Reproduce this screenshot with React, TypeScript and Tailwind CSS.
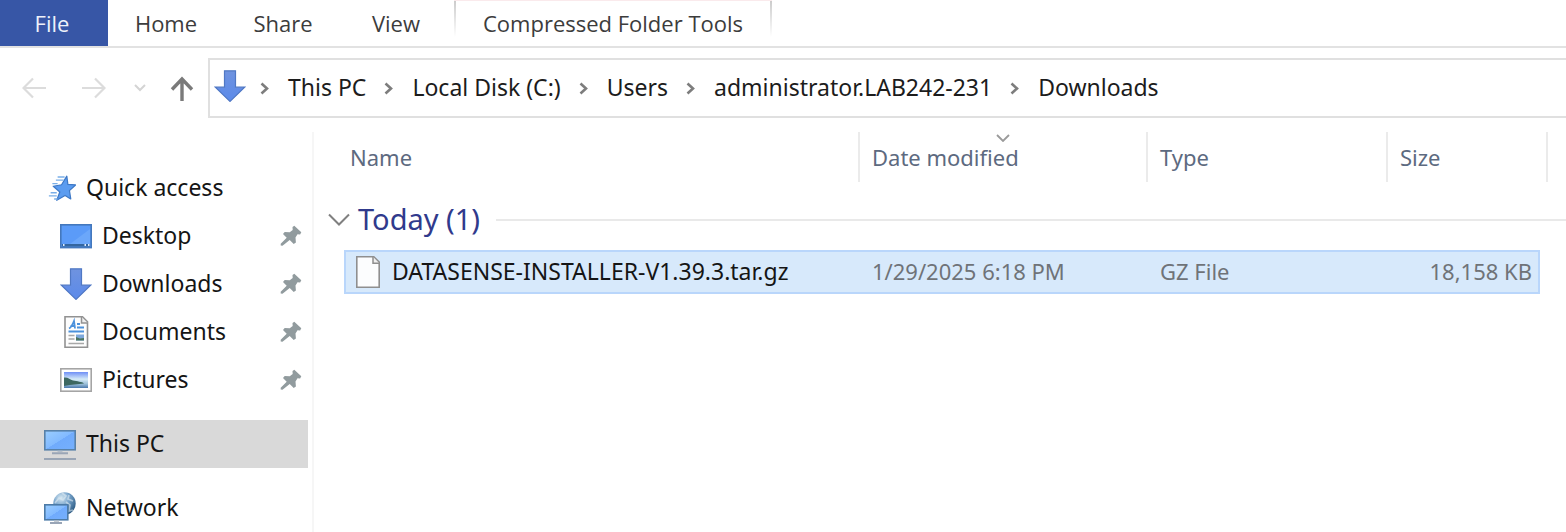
import React from "react";

type IconProps = { className?: string };

function DownArrowIcon({ className = "" }: IconProps) {
  return (
    <svg viewBox="0 0 32 32" className={`h-8 w-8 shrink-0 ${className}`} aria-hidden="true">
      <defs>
        <linearGradient id="arrowFill" x1="0" y1="0" x2="0" y2="1">
          <stop offset="0" stopColor="#6f93df" />
          <stop offset="1" stopColor="#5b8aea" />
        </linearGradient>
      </defs>
      <path d="M10.5 0.8h11v16.4h9.2L16 31.4 1.3 17.2h9.2z" fill="url(#arrowFill)" stroke="#5078c4" strokeWidth="1.2" />
    </svg>
  );
}

function StarIcon() {
  return (
    <svg viewBox="0 0 32 32" className="h-7 w-7 shrink-0" aria-hidden="true">
      <path d="M21.500 2.500l1.200 9.300 8.800.7-7 6.500 1.500 9.500-6.500-4-9.500 5.500 3.500-9.500-7.500-6.500 9.500-1.700z" fill="#5b9cf0" stroke="#3d78c6" strokeWidth="1.400" strokeLinejoin="round" />
      <path d="M11 3.500h8M9 7h9M5 11h6M3 21.500h7M1 25h9M7 28.500h4" stroke="#79aee8" strokeWidth="1.700" />
    </svg>
  );
}

function DesktopIcon() {
  return (
    <svg viewBox="0 0 32 32" className="h-8 w-8 shrink-0" aria-hidden="true">
      <rect x="0.8" y="4.800" width="30.4" height="22.8" fill="#5b9bf8" stroke="#4478bd" strokeWidth="1.6" />
      <path d="M10 24L30 9v15z" fill="#6ba7fa" />
      <path d="M2 25.300h28" stroke="#34669f" strokeWidth="2.600" />
      <path d="M3 25h1.500M24.500 25h1.500M28 25h1.500" stroke="#dbeaff" strokeWidth="1.800" />
    </svg>
  );
}

function DocumentIcon() {
  return (
    <svg viewBox="0 0 32 32" className="h-8 w-8 shrink-0" aria-hidden="true">
      <path d="M5 0.800h17.500l5 5v25.400H5z" fill="#fdfdfd" stroke="#929292" strokeWidth="1.600" />
      <path d="M21.500 1v6h6" fill="#ededed" stroke="#929292" strokeWidth="1.500" />
      <path d="M9 12.500c2-1 4-5 5-7.500l1 7.500M10.500 10h5" fill="none" stroke="#4b91dc" strokeWidth="1.800" />
      <path d="M17 8h3M17 11.500h7M8.500 15.500H24" stroke="#4b91dc" strokeWidth="1.900" />
      <path d="M8.500 19.500h6M8.500 23h6M8.500 27.500H24" stroke="#a8a8a8" strokeWidth="1.500" />
      <path d="M16 18.500h8v6h-8z" fill="#7da8dc" />
      <path d="M16 21l4 1.500 4-.5v2.500h-8z" fill="#4c7560" />
    </svg>
  );
}

function PictureIcon() {
  return (
    <svg viewBox="0 0 32 32" className="h-8 w-8 shrink-0" aria-hidden="true">
      <defs>
        <linearGradient id="skyFill" x1="0" y1="0" x2="0" y2="1">
          <stop offset="0" stopColor="#6f8ff6" />
          <stop offset="0.45" stopColor="#d5ebf7" />
          <stop offset="0.75" stopColor="#9bbfd8" />
          <stop offset="1" stopColor="#4b78ac" />
        </linearGradient>
      </defs>
      <rect x="0.800" y="4.800" width="30.400" height="22.400" fill="#fff" stroke="#a5a5a5" strokeWidth="1.600" />
      <rect x="4" y="8" width="24" height="16" fill="url(#skyFill)" />
      <path d="M4 13.500c4-.5 6 2 9 3 4 1 9 1 11 3-6 1-12 1-20 2.500z" fill="#3d6760" />
    </svg>
  );
}

function ComputerIcon() {
  return (
    <svg viewBox="0 0 32 32" className="h-8 w-8 shrink-0" aria-hidden="true">
      <defs>
        <linearGradient id="screenFill" x1="0" y1="0" x2="1" y2="1">
          <stop offset="0" stopColor="#9bceff" />
          <stop offset="0.5" stopColor="#82baff" />
          <stop offset="0.51" stopColor="#70abfc" />
          <stop offset="1" stopColor="#75b0fe" />
        </linearGradient>
      </defs>
      <rect x="0.800" y="2.800" width="30.400" height="19" fill="url(#screenFill)" stroke="#5781a9" strokeWidth="1.600" />
      <path d="M13.500 23.500h5" stroke="#b5bfca" strokeWidth="1.500" />
      <path d="M8 25.200h16M0 31h32" stroke="#99a5b6" strokeWidth="2" />
    </svg>
  );
}

function NetworkIcon() {
  return (
    <svg viewBox="0 0 32 32" className="h-8 w-8 shrink-0" aria-hidden="true">
      <defs>
        <radialGradient id="globeFill" cx="0.350" cy="0.250" r="0.800">
          <stop offset="0" stopColor="#d6e8f2" />
          <stop offset="0.45" stopColor="#79a5cc" />
          <stop offset="1" stopColor="#28567f" />
        </radialGradient>
      </defs>
      <circle cx="20.500" cy="11.500" r="11.200" fill="url(#globeFill)" />
      <path d="M18 1l4 3-3 4-4-2-4 5M25 3l-1 4 5 2M22 10l4 3-1 6 4-1" fill="none" stroke="#dceaf2" strokeWidth="1.700" opacity="0.600" />
      <rect x="0.800" y="12.800" width="23" height="15" fill="url(#screenFill)" stroke="#4c7ba7" strokeWidth="1.600" />
      <path d="M10 29h5" stroke="#b0bac4" strokeWidth="1.500" />
      <path d="M6 31h12" stroke="#99a5b6" strokeWidth="2" />
    </svg>
  );
}

function PinIcon() {
  return (
    <svg viewBox="0 0 22 22" className="h-[22px] w-[22px] shrink-0" aria-hidden="true">
      <path d="M12.500 2l1.800-1.200 7 6.500-1.200 2.200-2.600-.2-2 3.200.4 5-2.200 1.500-4-4L2.500 20.800.7 20.500v-1.700l6-6-3.700-3.700 1.700-2 5 .2 3-2.300z" fill="#919b9e" />
    </svg>
  );
}

function FileIcon() {
  return (
    <svg viewBox="0 0 24 32" className="h-8 w-6 shrink-0" aria-hidden="true">
      <path d="M0.800 0.800h17l5.400 5.400v25H0.800z" fill="#fcfdfe" stroke="#8f8f8f" strokeWidth="1.600" />
      <path d="M17 1v6.200h6" fill="#efefef" stroke="#8f8f8f" strokeWidth="1.500" />
    </svg>
  );
}

function Crumb() {
  return (
    <svg viewBox="0 0 10 14" className="h-[14px] w-[10px] shrink-0" aria-hidden="true">
      <path d="M1.500 2.500l5.500 5-5.500 5" fill="none" stroke="#7d7d7d" strokeWidth="2.600" />
    </svg>
  );
}

const places = [
  { name: "Desktop", icon: <DesktopIcon /> },
  { name: "Downloads", icon: <DownArrowIcon /> },
  { name: "Documents", icon: <DocumentIcon /> },
  { name: "Pictures", icon: <PictureIcon /> },
];

const path = ["This PC", "Local Disk (C:)", "Users", "administrator.LAB242-231", "Downloads"];

function Ribbon() {
  return (
    <nav aria-label="Ribbon" className="flex h-12 items-stretch border-b-2 border-[#e2e2e2] pr-4 font-['Open_Sans',sans-serif] text-[22px] text-[#3c3c3c]">
      <button className="w-[108px] shrink-0 bg-[#3756a6] pr-1 text-[#eef1fa]">File</button>
      <button className="w-[116px] shrink-0">Home</button>
      <button className="w-[118px] shrink-0">Share</button>
      <button className="w-[108px] shrink-0">View</button>
      <div className="ml-1 flex shrink-0 border-t border-[#faeaec]">
        <span className="h-9 w-[2px] bg-linear-to-b from-[#cccccc] to-white" />
        <button className="w-[314px]">Compressed Folder Tools</button>
        <span className="h-9 w-[2px] bg-linear-to-b from-[#cccccc] to-white" />
      </div>
    </nav>
  );
}

function AddressBar() {
  return (
    <div className="mt-[10px] flex h-[60px] items-stretch">
      <div className="flex w-[208px] shrink-0 items-center pl-[22px]">
        <button aria-label="Back" className="w-6">
          <svg viewBox="0 0 24 22" className="h-[22px] w-6">
            <path d="M24 11H2M11 1.500L1.500 11l9.500 9.500" fill="none" stroke="#dcdcdc" strokeWidth="2.200" />
          </svg>
        </button>
        <button aria-label="Forward" className="ml-9 w-6">
          <svg viewBox="0 0 24 22" className="h-[22px] w-6">
            <path d="M0 11h22M13 1.500l9.500 9.500-9.500 9.500" fill="none" stroke="#dcdcdc" strokeWidth="2.200" />
          </svg>
        </button>
        <button aria-label="Recent locations" className="ml-7 w-3">
          <svg viewBox="0 0 12 8" className="h-2 w-3">
            <path d="M1 1l5 5 5-5" fill="none" stroke="#d4d4d4" strokeWidth="2" />
          </svg>
        </button>
        <button aria-label="Up" className="ml-6 w-6">
          <svg viewBox="0 0 24 26" className="h-[26px] w-6">
            <path d="M12 26V4M2 14.500L12 4l10 10.500" fill="none" stroke="#7a7a7a" strokeWidth="3.400" />
          </svg>
        </button>
      </div>
      <div className="flex min-w-0 grow items-center gap-[18px] border-2 border-r-0 border-[#e0e0e0] pl-1 text-[23px] text-[#1c1c1c]">
        <DownArrowIcon className="-mt-1 -mr-1" />
        {path.map((part) => (
          <React.Fragment key={part}>
            <Crumb />
            <a href="#" className="pb-0.5 whitespace-nowrap">
              {part}
            </a>
          </React.Fragment>
        ))}
      </div>
    </div>
  );
}

function Sidebar() {
  return (
    <nav aria-label="Folders" className="w-[314px] shrink-0 border-r-2 border-[#f6f6f6] pt-8 text-[23px] text-[#151515]">
      <a href="#" className="flex h-12 items-center gap-[10px] pl-12">
        <StarIcon />
        <span className="pb-0.5">Quick access</span>
      </a>
      {places.map((place) => (
        <a key={place.name} href="#" className="flex h-12 items-center gap-[10px] pr-[10px] pl-[60px]">
          {place.icon}
          <span className="grow pb-0.5">{place.name}</span>
          <PinIcon />
        </a>
      ))}
      <a href="#" aria-current="page" className="mt-4 mr-1 flex h-12 items-center gap-[10px] bg-[#d9d9d9] pl-11">
        <ComputerIcon />
        <span className="pb-0.5">This PC</span>
      </a>
      <a href="#" className="mt-4 flex h-12 items-center gap-[10px] pl-11">
        <NetworkIcon />
        <span className="pb-0.5">Network</span>
      </a>
    </nav>
  );
}

function FileList() {
  return (
    <main className="min-w-0 grow">
      <table className="w-full table-fixed border-separate border-spacing-0 text-left text-[22px] whitespace-nowrap">
        <colgroup>
          <col className="w-[30px]" />
          <col />
          <col className="w-[288px]" />
          <col className="w-[240px]" />
          <col className="w-[152px]" />
          <col className="w-2" />
          <col className="w-[18px]" />
        </colgroup>
        <thead>
          <tr className="h-[50px] text-[#5d6a80] *:p-0 *:font-normal">
            <td />
            <th className="border-r-2 border-[#ebebeb]">
              <span className="pl-[6px]">Name</span>
            </th>
            <th aria-sort="descending" className="relative border-r-2 border-[#ebebeb]">
              <svg viewBox="0 0 14 8" className="absolute top-0.5 left-1/2 h-2 w-[14px] -translate-x-1/2" aria-hidden="true">
                <path d="M1 1l6 6 6-6" fill="none" stroke="#9a9a9a" strokeWidth="1.800" />
              </svg>
              <span className="pl-3">Date modified</span>
            </th>
            <th className="border-r-2 border-[#ebebeb]">
              <span className="pl-3">Type</span>
            </th>
            <th colSpan={2} className="border-r-2 border-[#ebebeb]">
              <span className="pl-3">Size</span>
            </th>
            <td />
          </tr>
        </thead>
        <tbody>
          <tr className="h-[68px]">
            <th colSpan={7} className="p-0 font-normal">
              <button className="flex w-full items-center pt-2 pl-[14px] text-[29px] text-[#303a8c]">
                <svg viewBox="0 0 22 14" className="mr-2 h-[14px] w-[22px] shrink-0" aria-hidden="true">
                  <path d="M1 1.500l10 10 10-10" fill="none" stroke="#808080" strokeWidth="2" />
                </svg>
                <span className="pb-0.5">Today (1)</span>
                <span className="ml-4 h-[2px] grow bg-[#e9e9e9]" />
              </button>
            </th>
          </tr>
          <tr className="h-11 text-[#6f7378] *:p-0">
            <td />
            <td className="border-y-2 border-l-2 border-[#b9d6fb] bg-[#d7e9fb]">
              <span className="flex items-center gap-3 pl-[10px] text-[23px] text-[#151515]">
                <FileIcon />
                <span className="pb-0.5">DATASENSE-INSTALLER-V1.39.3.tar.gz</span>
              </span>
            </td>
            <td className="border-y-2 border-[#b9d6fb] bg-[#d7e9fb]">
              <span className="block pb-0.5 pl-3">1/29/2025 6:18 PM</span>
            </td>
            <td className="border-y-2 border-[#b9d6fb] bg-[#d7e9fb]">
              <span className="block pb-0.5 pl-3">GZ File</span>
            </td>
            <td className="border-y-2 border-r-2 border-[#b9d6fb] bg-[#d7e9fb] text-right">
              <span className="block pr-[6px] pb-0.5">18,158 KB</span>
            </td>
            <td />
            <td />
          </tr>
        </tbody>
      </table>
    </main>
  );
}

export default function App() {
  return (
    <div className="min-h-screen overflow-x-hidden bg-white font-['Noto_Sans','Open_Sans',sans-serif]">
      <Ribbon />
      <AddressBar />
      <div className="mt-[14px] flex">
        <Sidebar />
        <FileList />
      </div>
    </div>
  );
}
